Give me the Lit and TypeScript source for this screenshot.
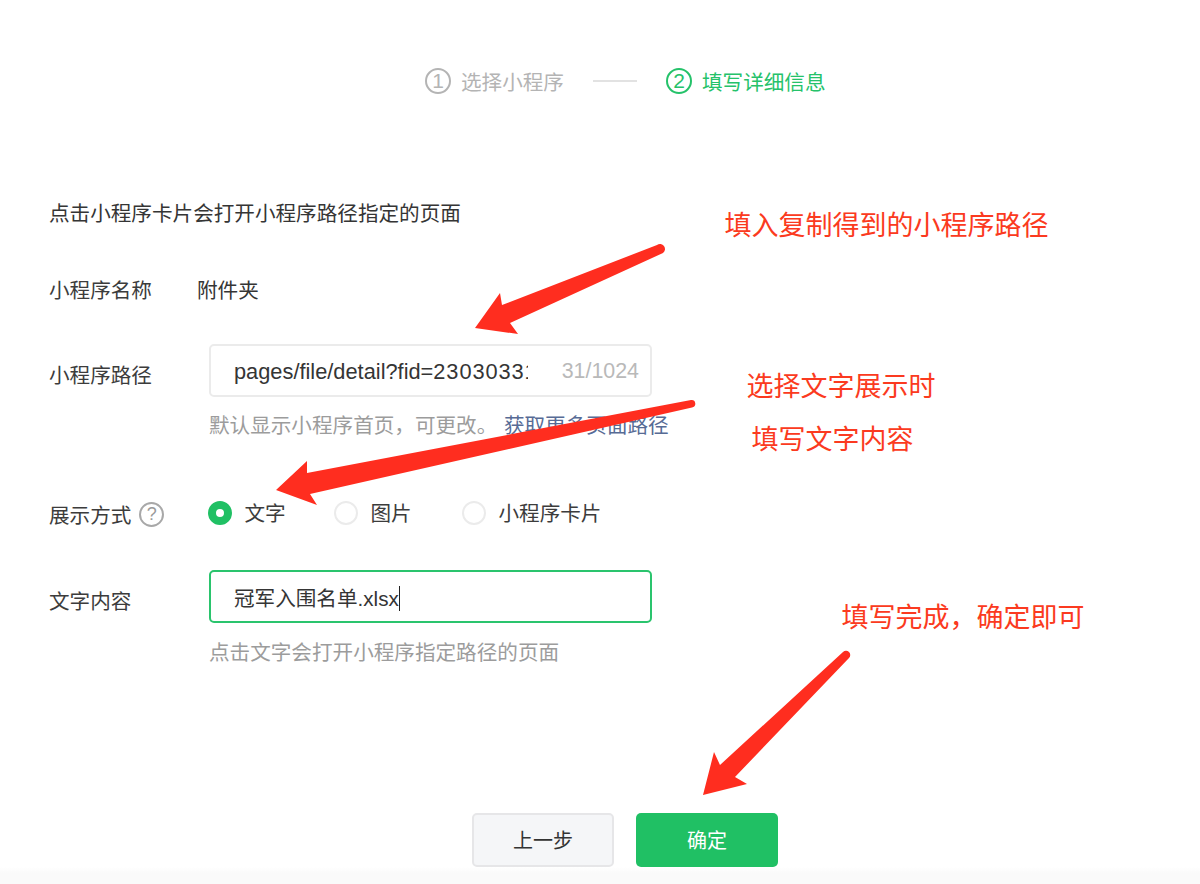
import { LitElement, html, css, svg } from "lit";
import { customElement } from "lit/decorators.js";

const ARROWS = [
  "M663 253 L510 323 L518 334 L475 328 L500 293 L502 305 L657 245 A4.5 4.5 0 0 1 663 253 Z",
  "M692 407.5 L310 494 L317 505 L276 490 L307 461 L307 473 L691 400 A3.7 3.7 0 0 1 692 407.5 Z",
  "M849 658 L735 777 L747 784 L703 795 L714 752 L720 765 L843 652 A4 4 0 0 1 849 658 Z",
];

const NOTES = [
  { cls: "n1", text: "填入复制得到的小程序路径" },
  { cls: "n2", text: "选择文字展示时" },
  { cls: "n3", text: "填写文字内容" },
  { cls: "n4", text: "填写完成，确定即可" },
];

@customElement("app-root")
export class AppRoot extends LitElement {
  static styles = css`
    :host {
      display: block;
      font-family: "Noto Sans CJK SC", "Liberation Sans", sans-serif;
      color: #353535;
      font-size: 20.6px;
      line-height: 28px;
    }
    .page {
      position: relative;
      width: 1200px;
      height: 884px;
      overflow: hidden;
      background: #fff;
      display: flex;
      flex-direction: column;
    }
    .steps {
      display: flex;
      align-items: center;
      padding: 67px 0 0 425px;
    }
    .step {
      display: flex;
      align-items: center;
      gap: 10px;
      color: #b4b4b4;
    }
    .step.on {
      color: #25c26a;
    }
    .num {
      width: 26px;
      height: 26px;
      box-sizing: border-box;
      border: 2px solid currentColor;
      border-radius: 50%;
      display: flex;
      align-items: center;
      justify-content: center;
      font-family: "Liberation Sans", sans-serif;
      font-size: 21px;
      line-height: 22px;
    }
    .sep {
      width: 44px;
      height: 1.5px;
      margin: 0 29px;
      background: #e2e2e2;
    }
    .form {
      padding: 103px 0 0 49px;
      display: flex;
      flex-direction: column;
    }
    .name-row {
      display: flex;
      margin-top: 49px;
    }
    .name-row .label {
      width: 148px;
    }
    .row {
      display: flex;
    }
    .label {
      width: 160px;
      flex: none;
      color: #3c3c3c;
    }
    .field-label {
      padding-top: 16px;
    }
    .mt41 {
      margin-top: 41px;
    }
    .mt42 {
      margin-top: 42px;
    }
    .mt58 {
      margin-top: 58px;
    }
    .input {
      width: 443px;
      height: 53px;
      box-sizing: border-box;
      border: 2px solid #ebebeb;
      border-radius: 5px;
      padding: 0 11px 0 23px;
      display: flex;
      align-items: center;
    }
    .input.focus {
      border-color: #2ac46d;
    }
    .clip {
      width: 294px;
      padding-top: 2px;
      overflow: hidden;
      white-space: nowrap;
      font-family: "Liberation Sans", sans-serif;
      font-size: 21.8px;
    }
    .digits {
      letter-spacing: 0.9px;
    }
    .count {
      margin-left: auto;
      color: #b9b9b9;
      font-family: "Liberation Sans", sans-serif;
      font-size: 21.4px;
    }
    .typed {
      padding-top: 2px;
      white-space: nowrap;
    }
    .typed .ext {
      font-family: "Liberation Sans", sans-serif;
    }
    .caret {
      display: inline-block;
      width: 1px;
      height: 25px;
      background: #222;
      vertical-align: -5px;
    }
    .hint {
      margin-top: 14px;
      color: #9c9c9c;
      white-space: nowrap;
    }
    .hint.tight {
      margin-top: 13px;
    }
    .hint a {
      margin-left: 2px;
      color: #576b95;
      text-decoration: none;
    }
    .mode-label {
      padding-top: 4px;
      display: flex;
      align-items: flex-start;
    }
    .help {
      width: 25px;
      height: 25px;
      margin: 2px 0 0 8px;
      box-sizing: border-box;
      border: 2px solid #a8a8a8;
      border-radius: 50%;
      color: #9a9a9a;
      font-family: "Liberation Sans", sans-serif;
      font-size: 18px;
      line-height: 21px;
      text-align: center;
    }
    .radios {
      display: flex;
      align-self: flex-start;
      margin-left: -1px;
      padding-top: 2px;
    }
    .radio {
      display: flex;
      align-items: center;
      gap: 12.5px;
      color: #3c3c3c;
    }
    .r1 {
      width: 126px;
    }
    .r2 {
      width: 128px;
    }
    .dot {
      width: 24px;
      height: 24px;
      margin-top: 2px;
      box-sizing: border-box;
      border: 2px solid #ebebeb;
      border-radius: 50%;
      flex: none;
    }
    .dot.on {
      border: 8.5px solid #20c064;
      background: #fff;
    }
    .actions {
      margin-top: 148px;
      flex: 1;
      padding-left: 472px;
      display: flex;
      align-items: flex-start;
      gap: 22px;
      background: linear-gradient(#fff 54px, #fafafa 60px);
    }
    .btn {
      width: 142px;
      height: 54px;
      box-sizing: border-box;
      border-radius: 5px;
      display: flex;
      align-items: center;
      justify-content: center;
      font-size: 20px;
    }
    .btn.ghost {
      background: #f5f6f8;
      border: 2px solid #e6e6e8;
      color: #333;
    }
    .btn.primary {
      background: #20c064;
      color: #fff;
    }
    .arrows {
      position: absolute;
      inset: 0;
      width: 1200px;
      height: 884px;
      pointer-events: none;
    }
    .arrows path {
      fill: #ff2d1f;
    }
    .note {
      position: absolute;
      color: #fb3a20;
      font-size: 27px;
      line-height: 36px;
      white-space: nowrap;
    }
    .n1 {
      left: 724.5px;
      top: 206px;
    }
    .n2 {
      left: 746.5px;
      top: 367px;
    }
    .n3 {
      left: 751.5px;
      top: 420px;
    }
    .n4 {
      left: 841.5px;
      top: 598px;
    }
  `;

  render() {
    return html`
      <div class="page">
        <div class="steps">
          <div class="step"><span class="num">1</span>选择小程序</div>
          <div class="sep"></div>
          <div class="step on"><span class="num">2</span>填写详细信息</div>
        </div>
        <div class="form">
          <div>点击小程序卡片会打开小程序路径指定的页面</div>
          <div class="name-row">
            <div class="label">小程序名称</div>
            <div>附件夹</div>
          </div>
          <div class="row mt41">
            <div class="label field-label">小程序路径</div>
            <div>
              <div class="input">
                <div class="clip">pages/file/detail?fid=<span class="digits">230303312</span></div>
                <div class="count">31/1024</div>
              </div>
              <div class="hint tight">默认显示小程序首页，可更改。 <a>获取更多页面路径</a></div>
            </div>
          </div>
          <div class="row mt58">
            <div class="label mode-label">展示方式<span class="help">?</span></div>
            <div class="radios">
              <div class="radio r1"><span class="dot on"></span>文字</div>
              <div class="radio r2"><span class="dot"></span>图片</div>
              <div class="radio"><span class="dot"></span>小程序卡片</div>
            </div>
          </div>
          <div class="row mt42">
            <div class="label field-label">文字内容</div>
            <div>
              <div class="input focus">
                <div class="typed">冠军入围名单<span class="ext">.xlsx</span><span class="caret"></span></div>
              </div>
              <div class="hint">点击文字会打开小程序指定路径的页面</div>
            </div>
          </div>
        </div>
        <div class="actions">
          <div class="btn ghost">上一步</div>
          <div class="btn primary">确定</div>
        </div>
        <svg class="arrows" viewBox="0 0 1200 884">
          ${ARROWS.map((d) => svg`<path d=${d}></path>`)}
        </svg>
        ${NOTES.map((n) => html`<div class="note ${n.cls}">${n.text}</div>`)}
      </div>
    `;
  }
}
